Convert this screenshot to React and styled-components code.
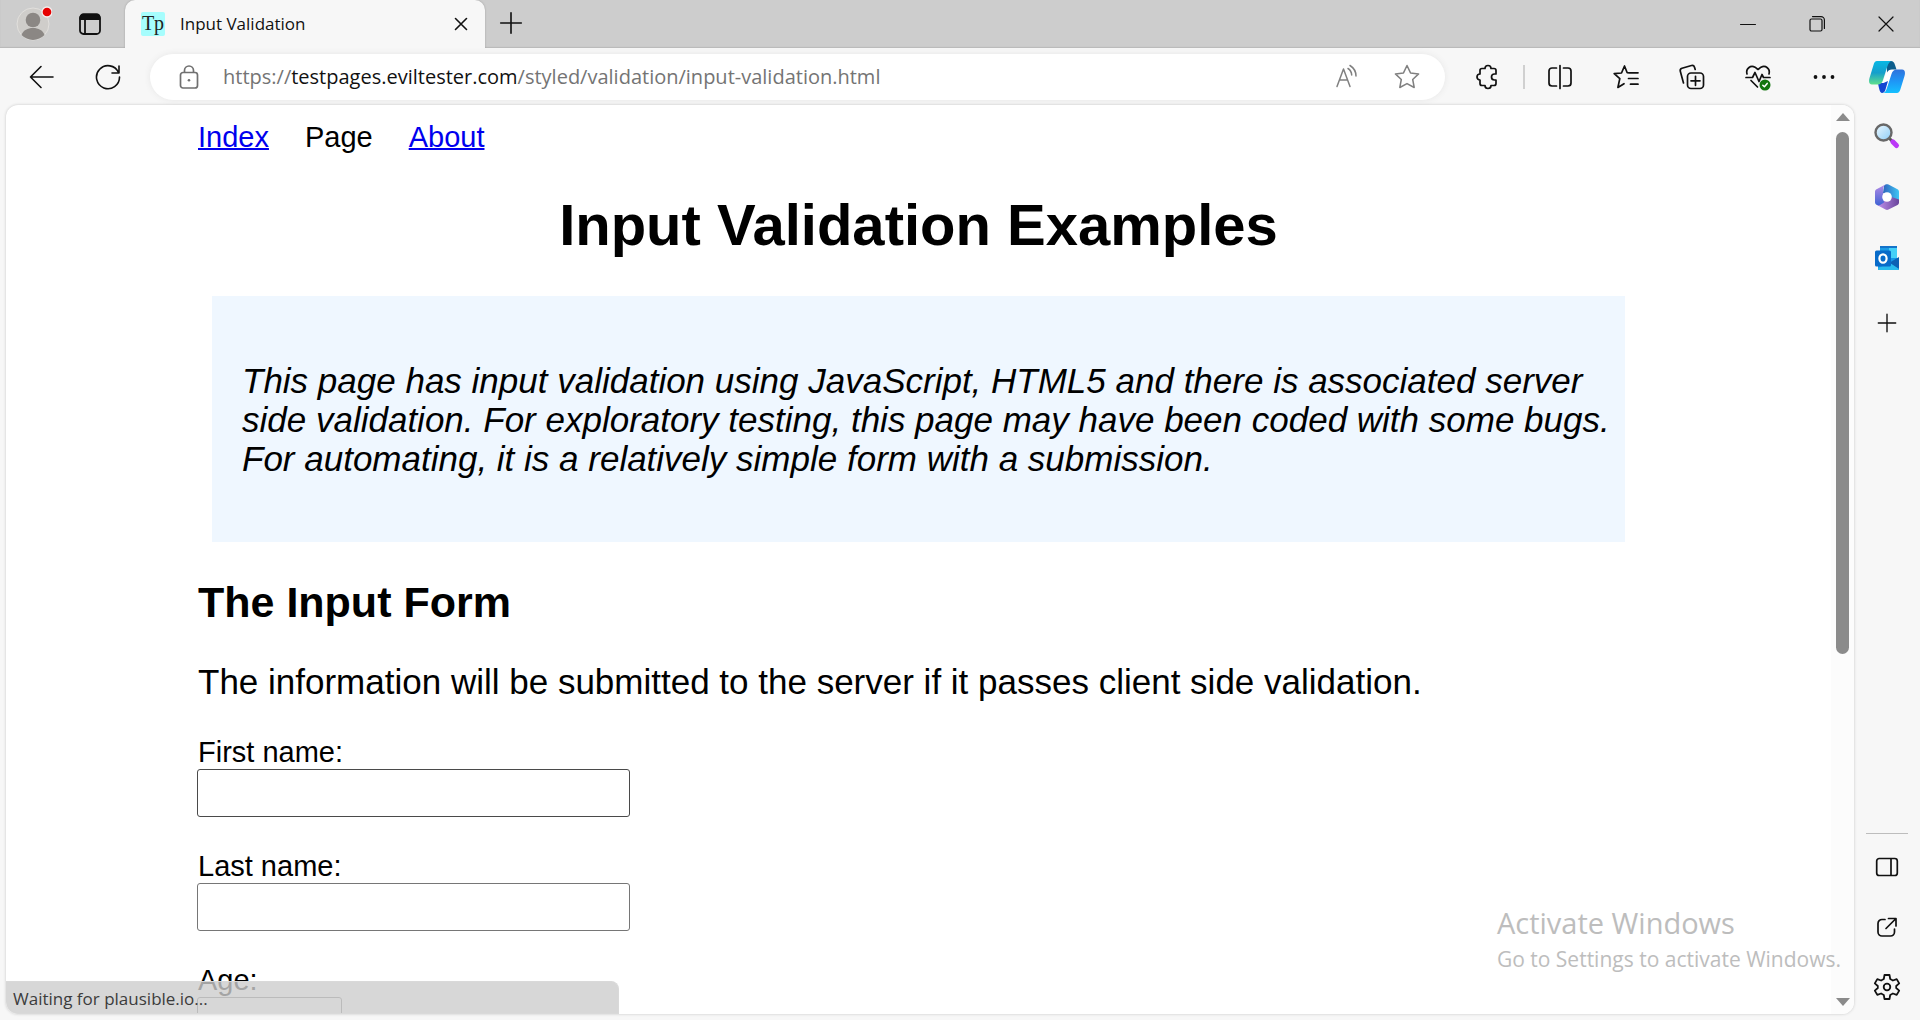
import React from "react";
import styled, { createGlobalStyle, css } from "styled-components";

const ui = '"Open Sans", "Noto Sans", sans-serif';
const pageFont = '"Liberation Sans", Arial, sans-serif';

const GlobalStyle = createGlobalStyle`
  *, *::before, *::after { box-sizing: border-box; }
  html, body, #root { height: 100%; }
  body { margin: 0; background: #f7f7f7; overflow: hidden; }
`;

const Browser = styled.div`
  display: flex;
  flex-direction: column;
  height: 100vh;
  color: #111;
  font-family: ${ui};
`;

const TitleBar = styled.header`
  display: flex;
  align-items: stretch;
  height: 48px;
  flex: none;
  background: #cdcdcd;
  box-shadow: inset 0 -1px 1px #b8b8b8;
`;

const IconButton = styled.button`
  display: flex;
  align-items: center;
  justify-content: center;
  flex: none;
  width: ${(p) => p.$w || 32}px;
  height: ${(p) => p.$h || 32}px;
  padding: 0;
  border: 0;
  background: transparent;
  color: ${(p) => p.$color || "#111"};
  svg { display: block; flex: none; }
`;

const TitleActions = styled.div`
  display: flex;
  align-items: center;
  gap: 12px;
  width: 125px;
  padding-left: 12px;
`;

const Tab = styled.div`
  display: flex;
  align-items: center;
  width: 360px;
  padding: 0 8px 0 16px;
  border-radius: 10px 10px 0 0;
  background: #f7f7f7;
  box-shadow: 0 0 2px #999;
  clip-path: inset(0 -3px 0 -3px);
`;

const Favicon = styled.span`
  width: 24px;
  height: 24px;
  border-radius: 2px;
  background: #a6fdfd;
  color: #222;
  font: 20px/22px "Liberation Serif", serif;
  text-align: center;
`;

const TabTitle = styled.span`
  flex: 1;
  padding-left: 15px;
  font-size: 17px;
  line-height: 24px;
`;

const WindowControls = styled.div`
  display: flex;
  align-items: center;
  margin-left: auto;
`;

const Toolbar = styled.div`
  display: flex;
  align-items: center;
  height: 57px;
  flex: none;
  padding: 0 3px 0 25px;
`;

const NavButtons = styled.nav`
  display: flex;
  gap: 32px;
  width: 125px;
`;

const AddressBar = styled.form`
  display: flex;
  align-items: center;
  flex: 1;
  height: 46px;
  padding: 0 22px 0 23px;
  border-radius: 23px;
  background: #fff;
  box-shadow: 0 0 6px #e6e6e6;
`;

const Url = styled.a`
  flex: 1;
  padding-left: 18px;
  color: #747474;
  font-size: 20px;
  line-height: 28px;
  text-decoration: none;
  strong { color: #111; font-weight: 400; }
`;

const AddressTools = styled.div`
  display: flex;
  gap: 28px;
`;

const Tools = styled.div`
  display: flex;
  align-items: center;
  padding-left: 26px;
`;

const ToolDivider = styled.span`
  width: 2px;
  height: 24px;
  margin: 0 2px 0 20px;
  background: #d0d0d0;
`;

const Workspace = styled.div`
  display: flex;
  flex: 1;
  min-height: 0;
`;

const Viewport = styled.div`
  position: relative;
  display: flex;
  flex: 1;
  min-width: 0;
  margin: 0 0 6px 6px;
  border-radius: 12px;
  background: #fff;
  box-shadow: 0 0 3px #c4c4c4;
  overflow: hidden;
`;

const Page = styled.main`
  flex: 1;
  min-width: 0;
  padding: 15px 192px 0;
  color: #000;
  font: 29px/34px ${pageFont};
  overflow: hidden;
`;

const PageNav = styled.nav`
  display: flex;
  gap: 36px;
  a { color: #00e; text-decoration: underline; text-decoration-thickness: 2px; }
`;

const Title = styled.h1`
  margin: 38px 0;
  font-size: 58px;
  line-height: 66px;
  text-align: center;
`;

const Explanation = styled.div`
  margin: 0 14px;
  padding: 65px 14px 64px 30px;
  background: #eff7ff;
  font-size: 35px;
  font-style: italic;
  line-height: 39px;
  p { margin: 0; }
`;

const Heading = styled.h2`
  margin: 36px 0;
  font-size: 43px;
  line-height: 48px;
`;

const Lead = styled.p`
  margin: 0 0 35px;
  font-size: 35px;
  line-height: 39px;
`;

const Field = styled.div`
  display: flex;
  flex-direction: column;
  align-items: flex-start;
  height: 82px;
  margin-bottom: 32px;
  label { line-height: 33px; }
`;

const TextInput = styled.input`
  width: ${(p) => p.$w}px;
  height: 48px;
  margin-left: -1px;
  padding: 2px 4px;
  border: 1px solid ${(p) => (p.$hover ? "#4a4a4a" : "#767676")};
  border-radius: 3px;
  background: #fff;
  font: inherit;
  outline: none;
`;

const Scrollbar = styled.div`
  display: flex;
  flex-direction: column;
  align-items: center;
  width: 23px;
  padding: 8px 0;
  background: #fcfcfc;
`;

const ScrollArrow = styled.span`
  border: 7px solid transparent;
  border-top-width: 0;
  border-bottom: 8px solid #8b8b8b;
  ${(p) => p.$down && css`transform: rotate(180deg);`}
`;

const ScrollTrack = styled.div`
  flex: 1;
  width: 13px;
  margin: 11px 0;
`;

const ScrollThumb = styled.div`
  height: 61%;
  border-radius: 7px;
  background: #8b8b8b;
`;

const Status = styled.div`
  position: absolute;
  left: 0;
  bottom: 0;
  width: 613px;
  height: 33px;
  padding-left: 7px;
  border: 1px solid #d9d9d9;
  border-left: 0;
  border-radius: 0 8px 0 12px;
  background: rgba(205, 205, 205, 0.8);
  color: #3c3c3c;
  font-size: 17px;
  line-height: 34px;
`;

const Watermark = styled.div`
  position: absolute;
  right: 13px;
  bottom: 40px;
  color: #bdbdbd;
  font-size: 21px;
  line-height: 30px;
  strong { display: block; font-size: 29px; font-weight: 400; line-height: 42px; }
`;

const Sidebar = styled.aside`
  display: flex;
  flex-direction: column;
  align-items: center;
  width: 66px;
  padding: 15px 0 17px;
`;

const SideGroup = styled.div`
  display: flex;
  flex-direction: column;
  align-items: center;
  gap: 29px;
  ${(p) => p.$bottom && css`
    gap: 28px;
    width: 42px;
    margin-top: auto;
    padding-top: 17px;
    border-top: 1px solid #bdbdbd;
  `}
`;

function Icon({ size = 24, width = 24, sw = 1.6, children }) {
  return (
    <svg width={size} height={size} viewBox={`0 0 ${width} ${width}`} fill="none" stroke="currentColor"
      strokeWidth={sw} strokeLinecap="round" strokeLinejoin="round" aria-hidden="true">{children}</svg>
  );
}

const Avatar = () => (
  <svg width="40" height="40" viewBox="0 0 40 40" aria-hidden="true">
    <circle cx="21" cy="20" r="16" fill="#cfcdca" stroke="#e2e0dd" strokeWidth="1" />
    <circle cx="21" cy="16" r="7.3" fill="#8b8784" />
    <path d="M9.500 31c2-5 6-7 11.500-7s9.500 2 11.500 7a16 16 0 0 1-23 0z" fill="#8b8784" />
    <circle cx="35" cy="8" r="5" fill="#e60000" stroke="#f5eeee" strokeWidth="1.300" />
  </svg>
);

const TabActions = () => (
  <Icon sw={1.8}><rect x="2" y="2.500" width="20" height="19.500" rx="3.500" /><path d="M2.500 7V5.500a3 3 0 0 1 3-3h13a3 3 0 0 1 3 3V7z" fill="currentColor" /><path d="M7 8v13.500" /></Icon>
);
const CloseIcon = () => <Icon><path d="M6.500 6.500l11 11M17.500 6.500l-11 11" /></Icon>;
const PlusIcon = ({ size = 26 }) => <Icon size={size} sw={1.5}><path d="M12 2.500v19M2.500 12h19" /></Icon>;
const Minimize = () => <Icon size={16} width={16} sw={1}><path d="M.5 8.500h15" /></Icon>;
const Restore = () => <Icon size={18} width={18} sw={1.2}><rect x="2" y="4" width="12" height="12" rx="1.500" /><path d="M4.500 1.600H13a3.400 3.400 0 0 1 3.400 3.400v8.500" /></Icon>;
const WindowClose = () => <Icon size={18} width={18} sw={1.2}><path d="M2 2l14 14M16 2L2 16" /></Icon>;
const Back = () => <Icon size={28} width={28} sw={1.6}><path d="M25 14H2.500M13 3.500L2.500 14 13 24.500" /></Icon>;
const Reload = () => <Icon size={28} width={28} sw={1.6}><path d="M24.500 9.500A11.500 11.500 0 1 0 25.500 14M25 3v7h-7" /></Icon>;
const Lock = () => <Icon size={26} width={26} sw={1.7}><rect x="4.500" y="8.500" width="17" height="15.500" rx="2.500" /><path d="M8.500 8V6.500a4.500 4.500 0 0 1 9 0V8" /><circle cx="13" cy="16.200" r="1.300" fill="currentColor" stroke="none" /></Icon>;
const ReadAloud = () => <Icon size={26} width={26} sw={1.5}><path d="M3 22.500L9.500 5 16 22.500M5.500 16h8M14 4.500c2.500 1.500 3.500 3.500 3.700 6.500M16 1.500c4 2.500 6 6 6 10.500" /></Icon>;
const StarIcon = () => <Icon size={28} width={28} sw={1.5}><path d="M14 2.500l3.500 7.400 8.100 1-5.900 5.600 1.500 8-7.200-3.900-7.200 3.900 1.500-8-5.900-5.600 8.100-1z" /></Icon>;
const Puzzle = () => (
  <Icon size={26} width={26} sw={1.7}><path d="M8 4.500h3a3 3 0 0 1 6 0h3a2 2 0 0 1 2 2V10h-1.500a3 3 0 0 0 0 6H22v3.500a2 2 0 0 1-2 2h-3a3 3 0 0 1-6 0H8a2 2 0 0 1-2-2V16a3 3 0 0 1 0-6V6.500a2 2 0 0 1 2-2z" /></Icon>
);
const Split = () => <Icon size={26} width={26} sw={1.7}><path d="M13 1.500v23M9.500 4H5a3 3 0 0 0-3 3v12a3 3 0 0 0 3 3h4.500M16.500 4H21a3 3 0 0 1 3 3v12a3 3 0 0 1-3 3h-4.500" /></Icon>;
const Favorites = () => <Icon size={28} width={28} sw={1.7}><path d="M17.500 10l-2.300-.300L12.500 3l-3 7-7.300.600 5.600 5-1.900 8.900 6.100-3.800M17.500 9.800h8.500M16.500 15.500H26M18.500 21.200H26" /></Icon>;
const Collections = () => <Icon size={28} width={28} sw={1.7}><rect x="9.500" y="10" width="16" height="15.500" rx="3.500" /><path d="M17.500 13.300v9M13 17.800h9M5.500 20L2.300 8.300a2.500 2.500 0 0 1 1.700-3l9.500-2.800a2.500 2.500 0 0 1 3 1.700L17.200 6.500" /></Icon>;
const Essentials = () => (
  <Icon size={28} width={28} sw={1.7}><path d="M3 11C1.500 5.500 6.500 2 11 4.200L14 6.500l3-2.300C21.500 2 26.500 5.500 25 11M2 14.500h6.500l2.500-5 4 9 3-7 1.500 3h6.500M7 17.500l6.500 6.500" /><circle cx="21" cy="22" r="5.500" fill="#12760e" stroke="none" /><path d="M18.800 22.200l1.600 1.600 2.800-3.400" stroke="#fff" strokeWidth="1.500" /></Icon>
);
const More = () => <Icon><g fill="currentColor" stroke="none"><circle cx="3.500" cy="12" r="1.900" /><circle cx="12" cy="12" r="1.900" /><circle cx="20.500" cy="12" r="1.900" /></g></Icon>;

const Copilot = () => (
  <svg width="36" height="32" viewBox="0 0 36 32" aria-hidden="true">
    <defs>
      <linearGradient id="cpA" x1="0" y1="0" x2="0" y2="1"><stop offset="0" stopColor="#08b8e4" /><stop offset=".5" stopColor="#159fcc" /><stop offset="1" stopColor="#5fe08c" /></linearGradient>
      <linearGradient id="cpB" x1="0" y1="0" x2="0" y2="1"><stop offset="0" stopColor="#2f72dc" /><stop offset=".5" stopColor="#1e96f6" /><stop offset="1" stopColor="#15c0ff" /></linearGradient>
    </defs>
    <path d="M19 8h6l-6 17h-7z" fill="#fff" />
    <path d="M18 0h4c2 0 3 1 4 4l1.500 4.500H23c-2.500 0-4 1-5 3z" fill="#0d5d8c" />
    <path d="M9 22h5.500l4.500-2-2.500 8.500c-.600 2-1.800 3.500-3.500 3.500-2 0-3-4-4-10z" fill="#1446d2" />
    <path d="M8 0h15c-2 0-3.500 2-4.500 5L14 19c-1 3-2.500 4.500-5.500 4.500H3c-3 0-3.500-3-2.500-6.500L4.500 4c.600-2.500 1.800-4 3.500-4z" fill="url(#cpA)" />
    <path d="M28 32H13.500c2 0 3.300-1.500 4.300-4.500L22.500 13c1-3 2.500-4.500 5.500-4.500h5c3 0 3.500 3 2.500 6.500l-4 13c-.700 2.500-2 4-3.500 4z" fill="url(#cpB)" />
  </svg>
);
const Search = () => (
  <svg width="28" height="28" viewBox="0 0 28 28" aria-hidden="true">
    <defs><linearGradient id="lens" x1="0" y1="0" x2="1" y2="1"><stop offset="0" stopColor="#eef9ff" /><stop offset="1" stopColor="#8ccdf8" /></linearGradient></defs>
    <path d="M16.500 16.500l3 3" stroke="#555" strokeWidth="3" />
    <path d="M19.800 19.800l3.700 3.700" stroke="#bb38f7" strokeWidth="5" strokeLinecap="round" />
    <circle cx="10.500" cy="10.500" r="8" fill="url(#lens)" stroke="#686868" strokeWidth="2.400" />
  </svg>
);
const M365 = () => (
  <svg width="28" height="28" viewBox="0 0 28 28" aria-hidden="true">
    <defs>
      <linearGradient id="ma" x1="0" y1="0" x2="1" y2="0"><stop offset="0" stopColor="#2e64bd" /><stop offset="1" stopColor="#3fc6f5" /></linearGradient>
      <linearGradient id="mb" x1="0" y1="0" x2="0" y2="1"><stop offset="0" stopColor="#b68be6" /><stop offset="1" stopColor="#3f63d4" /></linearGradient>
      <linearGradient id="mc" x1="0" y1="0" x2="1" y2="0"><stop offset="0" stopColor="#c291ed" /><stop offset="1" stopColor="#69449b" /></linearGradient>
    </defs>
    <path d="M11 2.500l1.500-1c1-.500 2-.500 3 0L24 6c1.500.800 2 1.600 2 3v11l-9.500-5.500L10 10z" fill="url(#ma)" />
    <path d="M26 19.500c0 1-.500 1.800-1.500 2.500l-9 4.500c-1 .500-2 .500-3 0L4 22l13-8.500 9 3z" fill="url(#mc)" />
    <path d="M12.500 1.500L4 6C2.500 6.800 2 7.600 2 9v10c0 1.500.500 2.300 2 3 1 .500 2 .500 3 0l4-2.500-1-10c0-4 0-6 2.500-8z" fill="url(#mb)" />
    <circle cx="14" cy="14" r="4.800" fill="#fff" />
  </svg>
);
const Outlook = () => (
  <svg width="28" height="28" viewBox="0 0 28 28" aria-hidden="true">
    <path d="M7 2h17v12H7z" fill="#45d0f7" /><path d="M7 2h17v2H7z" fill="#1473ca" /><path d="M7 4h9v8H7z" fill="#1c9be5" />
    <path d="M5 14h21v11c0 .600-.400 1-1 1H6c-.600 0-1-.400-1-1z" fill="#1497e8" /><path d="M26 13v12l-10-6z" fill="#0c61b4" /><path d="M5 24l12-5 9 6-1 1H6z" fill="#28bbed" />
    <rect x="2" y="6.500" width="16" height="16" rx="1.500" fill="#086bc9" />
    <ellipse cx="10" cy="14.500" rx="3.600" ry="4.200" fill="none" stroke="#fff" strokeWidth="2.200" />
  </svg>
);
const Panel = () => <Icon sw={1.7}><rect x="1.700" y="3.500" width="20.600" height="17" rx="2.500" /><path d="M16 4v16" /></Icon>;
const External = () => <Icon sw={1.7}><path d="M10 4.500H7a4 4 0 0 0-4 4v8.500a4 4 0 0 0 4 4h8.500a4 4 0 0 0 4-4v-3M13.500 3.500H21V11M20.500 4L11 13.500" /></Icon>;
const Gear = () => (
  <Icon size={28} width={28} sw={1.8}><path d="M11.500 2h5l.700 4 2.700 1.500 3.800-1.400 2.500 4.300-3 2.600v2l3 2.600-2.500 4.300-3.800-1.400-2.700 1.500-.700 4h-5l-.700-4-2.700-1.500-3.800 1.400-2.500-4.300 3-2.600v-2l-3-2.600 2.500-4.300 3.800 1.400L10.800 6z" /><circle cx="14" cy="14" r="3.300" /></Icon>
);

const tools = [
  ["Split screen", Split], ["Favorites", Favorites], ["Collections", Collections],
  ["Browser essentials", Essentials], ["Settings and more", More],
];

const fields = [
  { id: "firstname", label: "First name:", width: 433, hover: true },
  { id: "lastname", label: "Last name:", width: 433 },
  { id: "age", label: "Age:", width: 145 },
];

export default function App() {
  return (
    <Browser>
      <GlobalStyle />
      <TitleBar>
        <TitleActions>
          <IconButton $w={40} $h={48} aria-label="Profile"><Avatar /></IconButton>
          <IconButton $w={52} $h={48} aria-label="Tab actions"><TabActions /></IconButton>
        </TitleActions>
        <Tab>
          <Favicon>Tp</Favicon>
          <TabTitle>Input Validation</TabTitle>
          <IconButton aria-label="Close tab"><CloseIcon /></IconButton>
        </Tab>
        <IconButton $w={52} $h={46} aria-label="New tab"><PlusIcon /></IconButton>
        <WindowControls>
          <IconButton $w={69} $h={48} aria-label="Minimize"><Minimize /></IconButton>
          <IconButton $w={69} $h={48} aria-label="Restore"><Restore /></IconButton>
          <IconButton $w={69} $h={48} aria-label="Close"><WindowClose /></IconButton>
        </WindowControls>
      </TitleBar>
      <Toolbar>
        <NavButtons aria-label="History">
          <IconButton $w={34} aria-label="Back"><Back /></IconButton>
          <IconButton $w={34} aria-label="Refresh"><Reload /></IconButton>
        </NavButtons>
        <AddressBar>
          <IconButton $color="#707070" type="button" aria-label="Site information"><Lock /></IconButton>
          <Url href="https://testpages.eviltester.com/styled/validation/input-validation.html">
            https://<strong>testpages.eviltester.com</strong>/styled/validation/input-validation.html
          </Url>
          <AddressTools>
            <IconButton $color="#808080" type="button" aria-label="Read aloud"><ReadAloud /></IconButton>
            <IconButton $color="#808080" type="button" aria-label="Add to favorites"><StarIcon /></IconButton>
          </AddressTools>
        </AddressBar>
        <Tools>
          <IconButton aria-label="Extensions"><Puzzle /></IconButton>
          <ToolDivider />
          {tools.map(([name, Glyph]) => (
            <IconButton key={name} $w={66} aria-label={name}><Glyph /></IconButton>
          ))}
          <IconButton $w={60} $h={40} aria-label="Copilot"><Copilot /></IconButton>
        </Tools>
      </Toolbar>
      <Workspace>
        <Viewport>
          <Page>
            <PageNav>
              <a href="#index">Index</a>
              <span>Page</span>
              <a href="#about">About</a>
            </PageNav>
            <Title>Input Validation Examples</Title>
            <Explanation>
              <p>
                This page has input validation using JavaScript, HTML5 and there is associated server side
                validation. For exploratory testing, this page may have been coded with some bugs. For
                automating, it is a relatively simple form with a submission.
              </p>
            </Explanation>
            <Heading>The Input Form</Heading>
            <Lead>The information will be submitted to the server if it passes client side validation.</Lead>
            <form>
              {fields.map((f) => (
                <Field key={f.id}>
                  <label htmlFor={f.id}>{f.label}</label>
                  <TextInput id={f.id} $w={f.width} $hover={f.hover} />
                </Field>
              ))}
            </form>
          </Page>
          <Scrollbar>
            <ScrollArrow />
            <ScrollTrack><ScrollThumb /></ScrollTrack>
            <ScrollArrow $down />
          </Scrollbar>
          <Status>Waiting for plausible.io...</Status>
          <Watermark>
            <strong>Activate Windows</strong>
            Go to Settings to activate Windows.
          </Watermark>
        </Viewport>
        <Sidebar>
          <SideGroup>
            <IconButton aria-label="Search"><Search /></IconButton>
            <IconButton aria-label="Microsoft 365"><M365 /></IconButton>
            <IconButton aria-label="Outlook"><Outlook /></IconButton>
            <IconButton $h={40} aria-label="Customize"><PlusIcon size={22} /></IconButton>
          </SideGroup>
          <SideGroup $bottom>
            <IconButton aria-label="Hide sidebar"><Panel /></IconButton>
            <IconButton aria-label="Open externally"><External /></IconButton>
            <IconButton aria-label="Settings"><Gear /></IconButton>
          </SideGroup>
        </Sidebar>
      </Workspace>
    </Browser>
  );
}
